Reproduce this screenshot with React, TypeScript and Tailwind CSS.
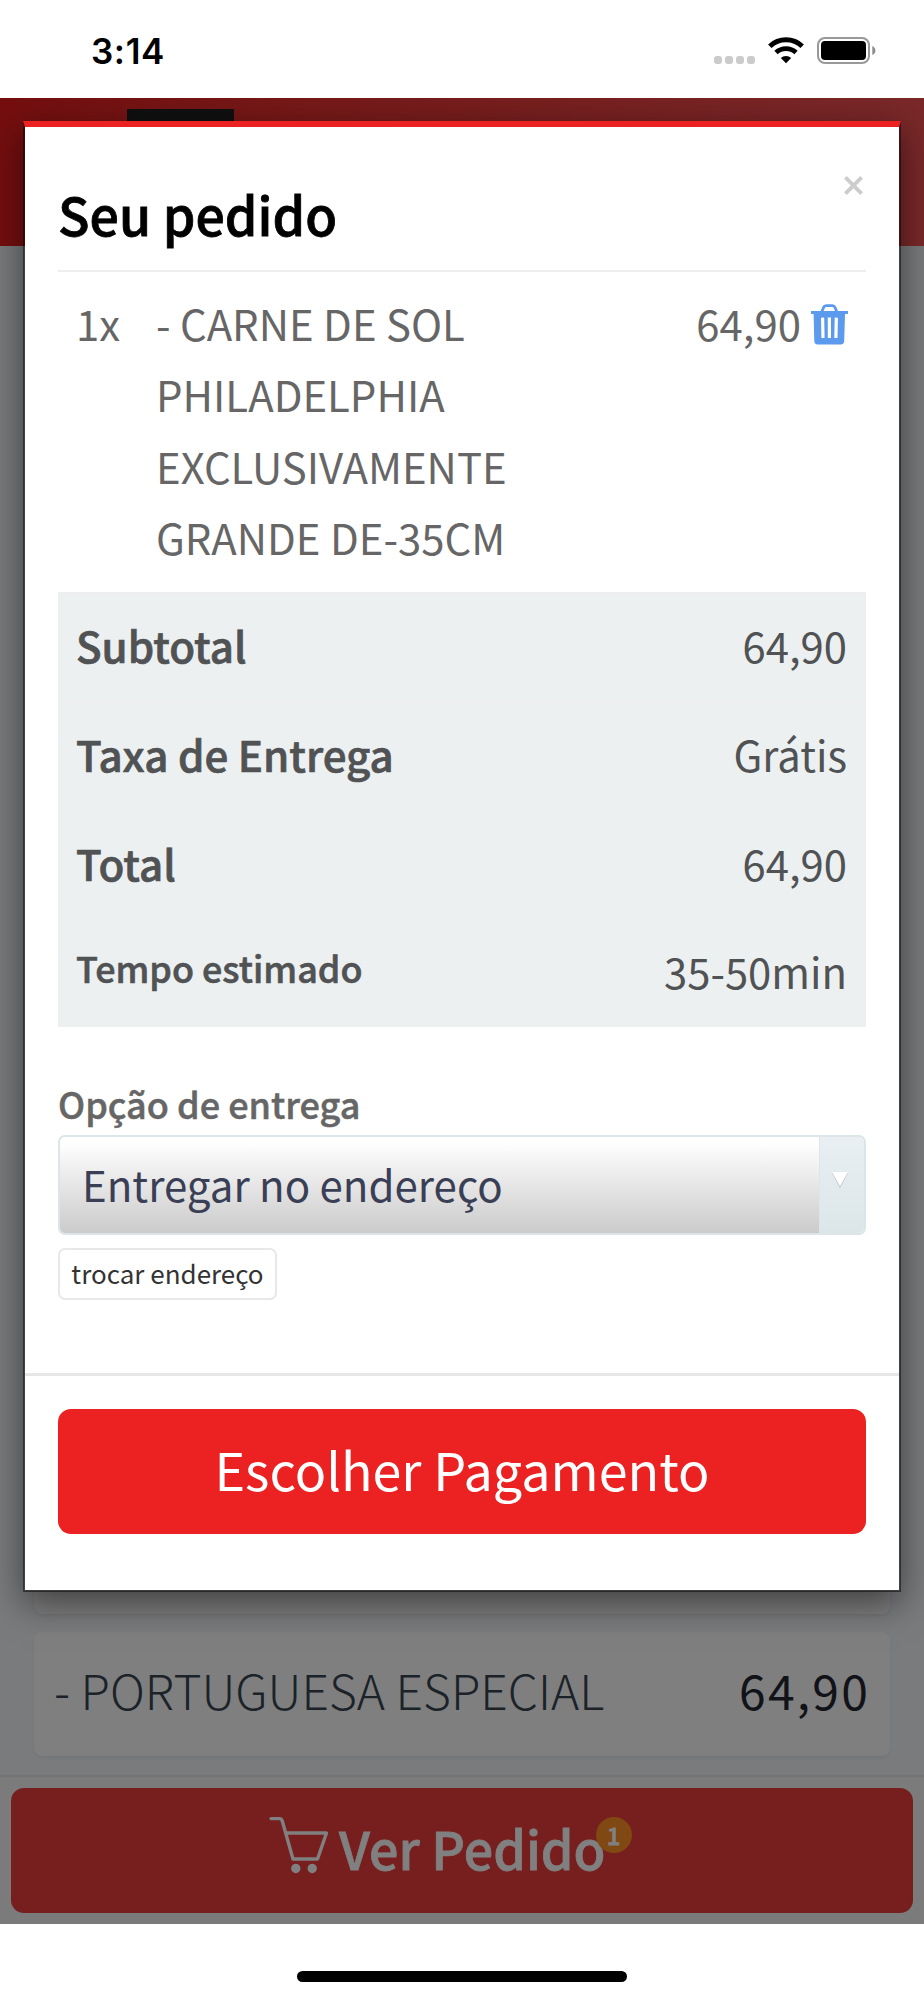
import React from "react";

interface SummaryRow {
  label: string;
  value: string;
  small?: boolean;
}

const summary: SummaryRow[] = [
  { label: "Subtotal", value: "64,90" },
  { label: "Taxa de Entrega", value: "Grátis" },
  { label: "Total", value: "64,90" },
  { label: "Tempo estimado", value: "35-50min", small: true },
];

const itemLines = ["- CARNE DE SOL", "PHILADELPHIA", "EXCLUSIVAMENTE", "GRANDE DE-35CM"];

function WifiIcon() {
  return (
    <svg width="36" height="27" viewBox="0 0 36 27" fill="none" stroke="#000" strokeWidth="5">
      <path d="M1.8 9.2 A23.5 23.5 0 0 1 34.2 9.2" />
      <path d="M8 15.6 A14.6 14.6 0 0 1 28 15.6" strokeWidth="4.8" />
      <path d="M18 26.2 L12.8 21 A7.6 7.6 0 0 1 23.2 21 Z" fill="#000" stroke="none" />
    </svg>
  );
}

function BatteryIcon() {
  return (
    <svg width="60" height="27" viewBox="0 0 60 27" fill="none">
      <rect x="1" y="1" width="51" height="25" rx="7" stroke="#999" strokeWidth="2" />
      <rect x="4" y="4" width="45" height="19" rx="4" fill="#000" />
      <path d="M55.3 9 Q58.4 10.5 58.4 13.5 Q58.4 16.5 55.3 18 Z" fill="#8c8c8c" />
    </svg>
  );
}

function TrashIcon() {
  return (
    <svg width="37" height="41" viewBox="0 0 37 41" fill="none">
      <path d="M10.7 8 L12.6 3.4 Q13.3 1.6 15.2 1.6 H21.4 Q23.3 1.6 24 3.4 L25.9 8" stroke="#5b9aec" strokeWidth="2.8" />
      <path
        d="M0 7 H37 V10 H34 L33.2 37 Q33 40.4 29.8 40.4 H6.6 Q3.4 40.4 3.3 37 L2.6 10 H0 Z"
        fill="#5b9aec"
      />
      <path d="M11.6 13.6 L12 34 M18.4 13.6 V34 M25.3 13.6 L24.9 34" stroke="#fff" strokeWidth="3.2" />
    </svg>
  );
}

function CartIcon() {
  return (
    <svg width="60" height="58" viewBox="0 0 60 58" fill="none" stroke="#808080" strokeWidth="3.4" strokeLinejoin="round">
      <path d="M2 2.6 H10.5 Q12.6 2.6 13.2 4.8 L24 43 H48.5 L57.5 17 H17" strokeLinecap="round" />
      <circle cx="26.8" cy="52.5" r="4.7" fill="#808080" stroke="none" />
      <circle cx="43.2" cy="52.5" r="4.7" fill="#808080" stroke="none" />
    </svg>
  );
}

function StatusBar() {
  return (
    <div className="flex h-[98px] items-start justify-between bg-white pr-[47px] pl-[91px]">
      <span className="mt-[30px] font-['Inter'] text-[35px] leading-[42px] font-semibold tracking-[0.6px] text-black">
        3:14
      </span>
      <div className="mt-[37px] flex items-end">
        <div className="mr-[13px] flex gap-[3px]">
          {[0, 1, 2, 3].map((dot) => (
            <span key={dot} className="h-[8px] w-[8px] rounded-[3px] bg-[#cbcbcb]" />
          ))}
        </div>
        <WifiIcon />
        <div className="ml-[13px]">
          <BatteryIcon />
        </div>
      </div>
    </div>
  );
}

// Menu page as seen through the half-opaque backdrop
function MenuPage() {
  return (
    <div className="flex h-full flex-col bg-[#7a7b7d]">
      <div className="h-[148px] bg-linear-to-r from-[#750e0f] to-[#7a2829] pt-[11px] pl-[127px]">
        <div className="h-[40px] w-[107px] bg-[#101010]" />
      </div>
      <div className="flex flex-1 flex-col justify-end gap-[18px] px-[34px] pb-[19px]">
        <div className="h-[124px] rounded-[8px] bg-[#7f7f7f] shadow-[0_2px_3px_rgba(0,0,0,0.05)]" />
        <div className="flex h-[124px] items-center justify-between rounded-[8px] bg-[#7f7f7f] pr-[20px] pl-[20px] text-[48px] leading-[60px] shadow-[0_2px_3px_rgba(0,0,0,0.05)]">
          <span className="mb-[11px] font-light text-[#1b2329]">- PORTUGUESA ESPECIAL</span>
          <span className="mb-[11px] tracking-[2.2px] text-[#121318]">64,90</span>
        </div>
      </div>
      <div className="h-[149px] border-t-2 border-[#737373] bg-[#7b7b7b] px-[11px] pt-[11px]">
        <div className="flex h-[125px] items-start rounded-[13px] bg-[#771e1e] pt-[28px] pl-[258px] text-[#808080]">
          <CartIcon />
          <div className="relative mt-[2px] ml-[10px] text-[52px] leading-[60px] font-medium [-webkit-text-stroke:0.8px]">
            Ver Pedido
            <span className="absolute -top-[1px] -right-[26px] flex h-[36px] w-[36px] items-center justify-center rounded-full bg-[#804812] pb-[1px] text-[24px] leading-[36px]">
              1
            </span>
          </div>
        </div>
      </div>
    </div>
  );
}

function OrderModal() {
  return (
    <div className="h-[1471px] border-x-2 border-t-6 border-b-2 border-x-black/45 border-t-[#ec2122] border-b-black/50 bg-white bg-clip-padding shadow-[0_11px_33px_rgba(0,0,0,0.5)]">
      <div className="px-[33px]">
        <div className="flex h-[145px] items-start justify-between border-b-2 border-[#eee] pt-[45px]">
          <h1 className="mt-[12px] text-[51.9px] leading-[60px] font-medium text-black [-webkit-text-stroke:0.8px]">
            Seu pedido
          </h1>
          <svg className="mt-[4px] mr-[3px]" width="19" height="19" viewBox="0 0 19 19" stroke="#ccc" strokeWidth="3.8">
            <path d="M1.4 1.4 L17.6 17.6 M17.6 1.4 L1.4 17.6" />
          </svg>
        </div>

        <div className="flex h-[320px] pt-[15px] pr-[18px] pl-[18px] text-[41.9px] leading-[71.4px] text-[#666]">
          <span className="w-[80px]">1x</span>
          <div className="flex-1">
            {itemLines.map((line) => (
              <p key={line}>{line}</p>
            ))}
          </div>
          <span>64,90</span>
          <div className="mt-[17px] ml-[10px]">
            <TrashIcon />
          </div>
        </div>

        <div className="h-[435px] bg-[#ecf0f1] text-[#505254]">
          {summary.map((row) => (
            <div
              key={row.label}
              className="flex h-[109px] items-center justify-between border-t-2 border-[#eeeeee] pr-[19px] pl-[18px] pb-[6px] text-[41.8px] leading-[60px]"
            >
              <span
                className={
                  row.small
                    ? "mb-[9px] text-[35.9px] font-medium [-webkit-text-stroke:0.6px]"
                    : "text-[42.1px] font-medium [-webkit-text-stroke:0.7px]"
                }
              >
                {row.label}
              </span>
              <span className={row.small ? "mb-[2px]" : ""}>{row.value}</span>
            </div>
          ))}
        </div>

        <label className="mt-[50px] block text-[36px] leading-[53px] font-medium text-[#666] [-webkit-text-stroke:0.5px]">
          Opção de entrega
        </label>
        <div className="mt-[5px] flex h-[100px] overflow-hidden rounded-[7px] border-2 border-[#dce6e9]">
          <div className="flex flex-1 items-center bg-linear-to-b from-white from-5% to-[#cbcbcb] pb-[3px] pl-[22px] text-[42px] leading-[60px] text-[#3a3f56]">
            Entregar no endereço
          </div>
          <div className="flex w-[45px] border-l border-[#dce6e9] bg-linear-to-b from-[#e9eff2] to-[#dce6e9] pt-[34px] pl-[11px]">
            <svg width="18" height="18" viewBox="0 0 18 18">
              <path d="M1 2 H17 L9 17 Z" fill="#b4bcbf" />
              <path d="M1 1 H17 L9 15.5 Z" fill="#fff" />
            </svg>
          </div>
        </div>
        <button className="mt-[13px] flex h-[52px] w-[219px] items-center justify-center rounded-[7px] border-2 border-[#e8e8e8] pb-[3px] text-[26px] leading-[40px] text-[#333]">
          trocar endereço
        </button>
      </div>

      <div className="mt-[73px] border-t-3 border-[#e7e7e7] px-[33px] pt-[33px]">
        <button className="flex h-[125px] w-full items-center justify-center rounded-[13px] bg-[#ec2122] pb-[5px] text-[52px] leading-[60px] text-white">
          Escolher Pagamento
        </button>
      </div>
    </div>
  );
}

export default function App() {
  return (
    <div className="h-[2000px] w-[924px] overflow-hidden bg-white font-['Noto_Sans_CJK_SC','Noto_Sans',sans-serif]">
      <StatusBar />
      <div className="relative h-[1826px] overflow-hidden">
        <MenuPage />
        <div className="absolute inset-0 px-[23px] pt-[23px]">
          <OrderModal />
        </div>
      </div>
      <div className="flex h-[76px] justify-center pt-[47px]">
        <div className="h-[11px] w-[330px] rounded-full bg-black" />
      </div>
    </div>
  );
}
